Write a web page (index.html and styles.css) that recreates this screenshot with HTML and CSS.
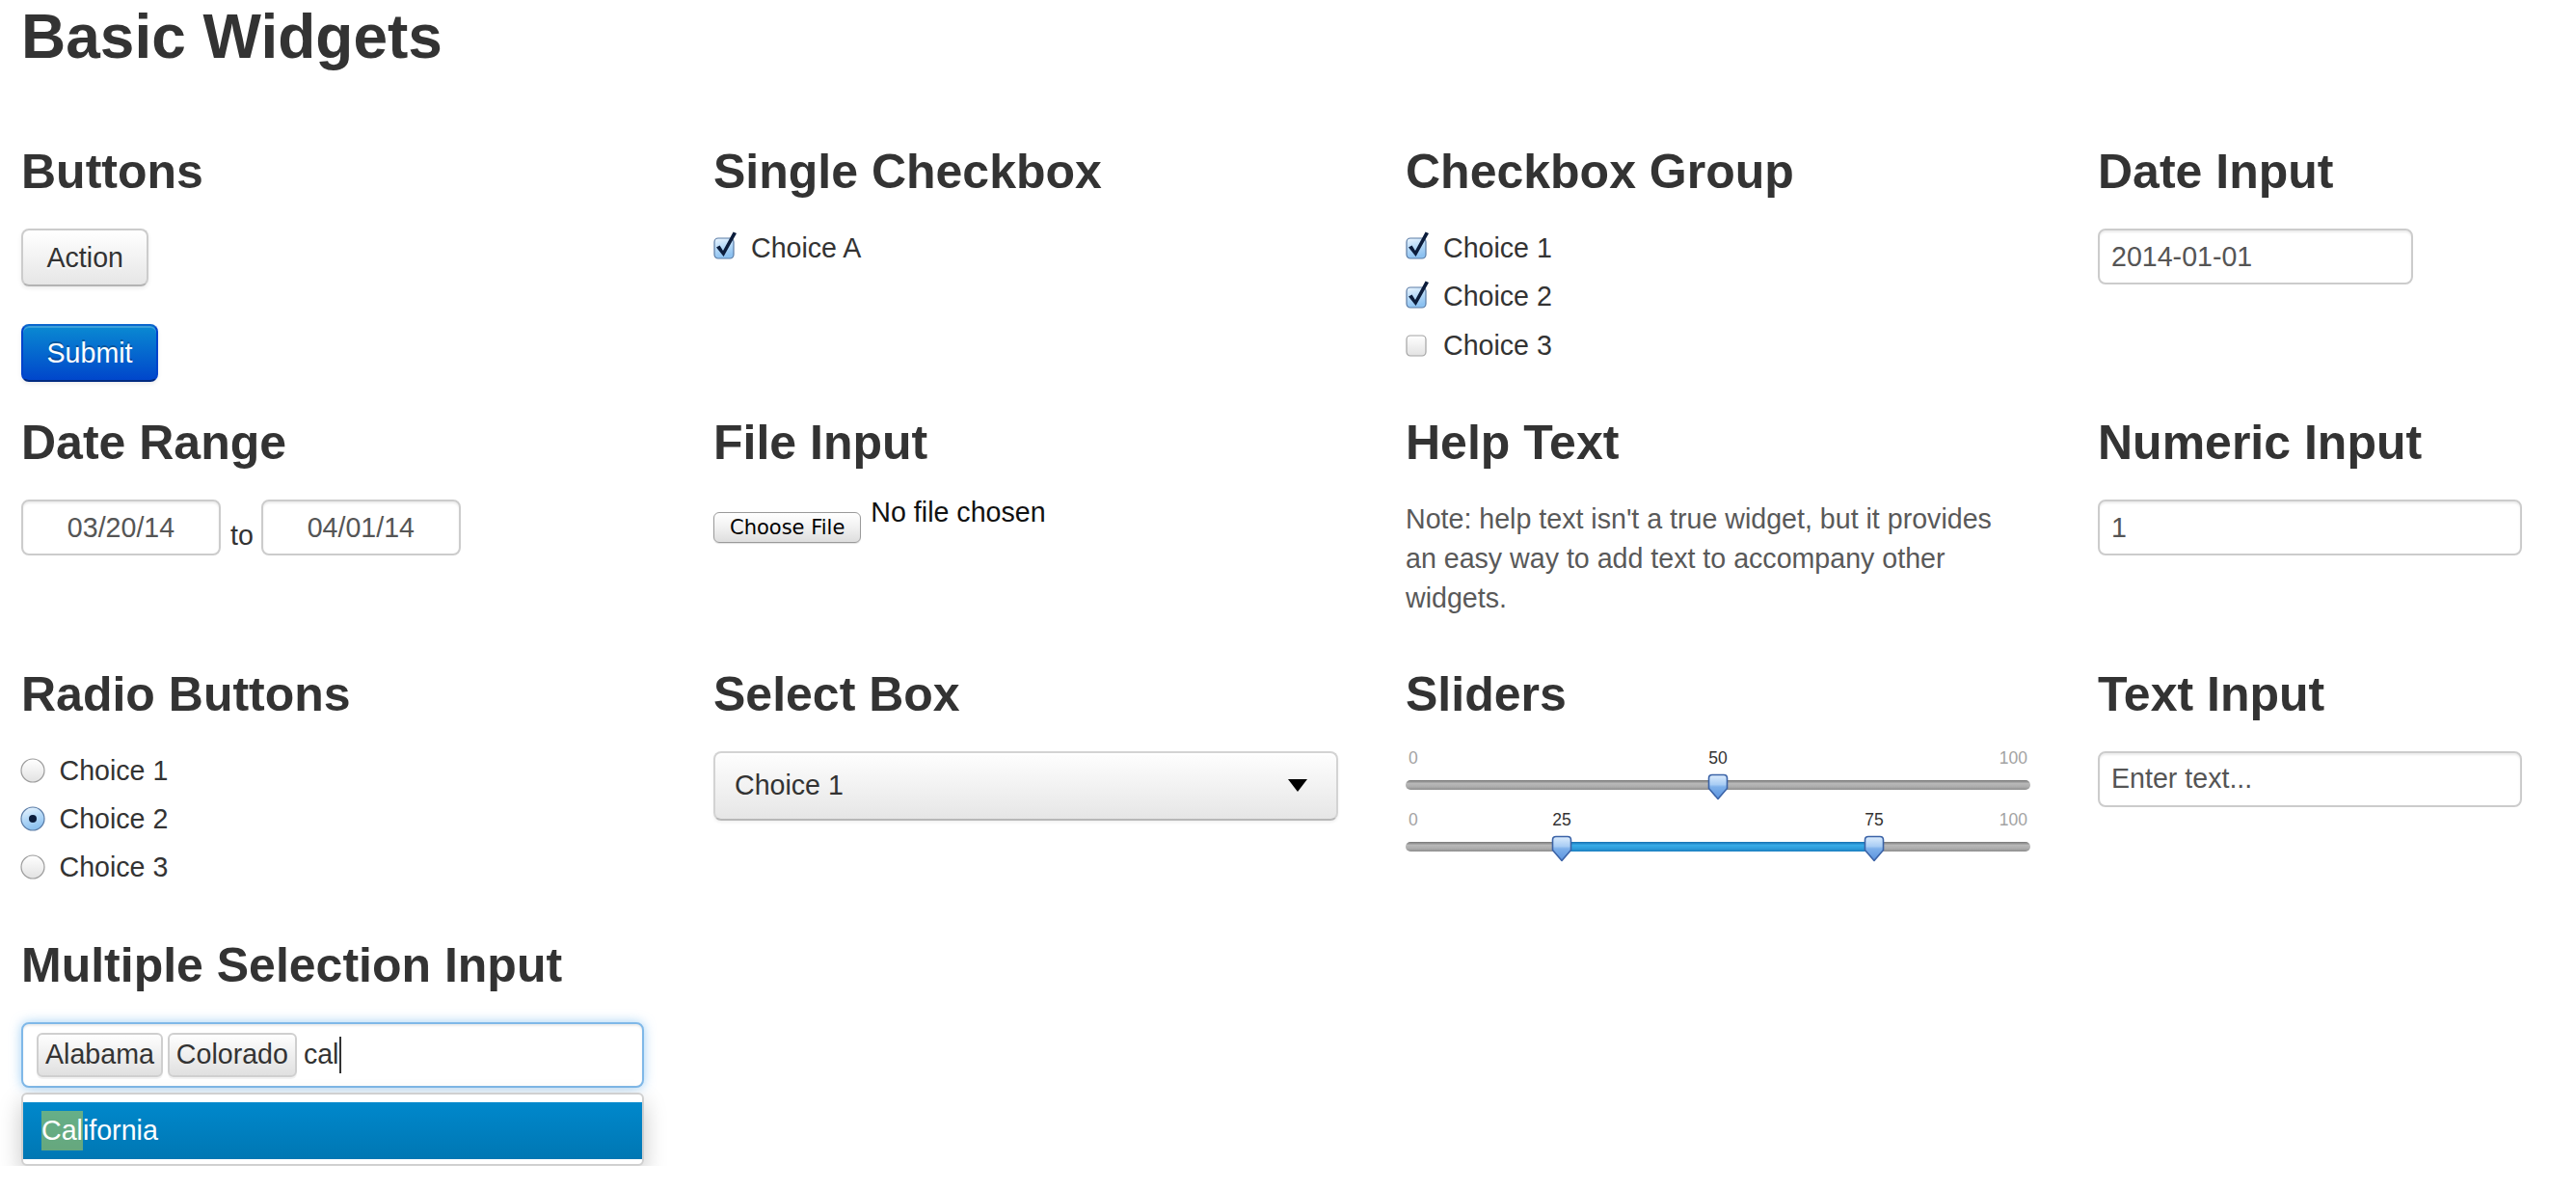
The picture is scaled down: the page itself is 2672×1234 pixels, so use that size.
FILE: index.html
```html
<!DOCTYPE html>
<html lang="en">
<head>
<meta charset="utf-8">
<title>Basic Widgets</title>
<link rel="stylesheet" href="styles.css">
</head>
<body>
<svg class="defs" width="0" height="0" aria-hidden="true">
  <defs>
    <linearGradient id="cbOn" x1="0" y1="0" x2="0.3" y2="1">
      <stop offset="0" stop-color="#eef7ff"/>
      <stop offset="0.5" stop-color="#b9dbf8"/>
      <stop offset="1" stop-color="#8cc1f0"/>
    </linearGradient>
    <linearGradient id="cbOff" x1="0" y1="0" x2="0" y2="1">
      <stop offset="0" stop-color="#ffffff"/>
      <stop offset="1" stop-color="#e2e2e2"/>
    </linearGradient>
    <linearGradient id="hdl" x1="0" y1="0" x2="0" y2="1">
      <stop offset="0" stop-color="#dcecfd"/>
      <stop offset="0.4" stop-color="#a9cdf4"/>
      <stop offset="0.5" stop-color="#7eb0ea"/>
      <stop offset="1" stop-color="#5b93de"/>
    </linearGradient>
  </defs>
</svg>
<div class="page">
  <h2 class="title">Basic Widgets</h2>
  <div class="grid">

    <section class="cell">
      <h3>Buttons</h3>
      <div class="btn-col">
        <button class="btn">Action</button>
        <button class="btn btn-primary">Submit</button>
      </div>
    </section>

    <section class="cell">
      <h3>Single Checkbox</h3>
      <div class="options">
        <label class="opt">
          <svg class="cb" viewBox="0 0 26 30" width="26" height="30"><rect x="1" y="8" width="20" height="21" rx="4" fill="url(#cbOn)" stroke="#5b7ca6" stroke-width="1.2"/><path d="M3 17.5 L6.6 15.6 L10 21 L20.6 1.5 L24 2.9 L10.6 27 Z" fill="#0c1d3c"/></svg>
          <span>Choice A</span>
        </label>
      </div>
    </section>

    <section class="cell">
      <h3>Checkbox Group</h3>
      <div class="options">
        <label class="opt">
          <svg class="cb" viewBox="0 0 26 30" width="26" height="30"><rect x="1" y="8" width="20" height="21" rx="4" fill="url(#cbOn)" stroke="#5b7ca6" stroke-width="1.2"/><path d="M3 17.5 L6.6 15.6 L10 21 L20.6 1.5 L24 2.9 L10.6 27 Z" fill="#0c1d3c"/></svg>
          <span>Choice 1</span>
        </label>
        <label class="opt">
          <svg class="cb" viewBox="0 0 26 30" width="26" height="30"><rect x="1" y="8" width="20" height="21" rx="4" fill="url(#cbOn)" stroke="#5b7ca6" stroke-width="1.2"/><path d="M3 17.5 L6.6 15.6 L10 21 L20.6 1.5 L24 2.9 L10.6 27 Z" fill="#0c1d3c"/></svg>
          <span>Choice 2</span>
        </label>
        <label class="opt">
          <svg class="cb" viewBox="0 0 26 30" width="26" height="30"><rect x="1" y="8" width="20" height="21" rx="4" fill="url(#cbOff)" stroke="#a3a3a3" stroke-width="1.2"/></svg>
          <span>Choice 3</span>
        </label>
      </div>
    </section>

    <section class="cell">
      <h3>Date Input</h3>
      <input class="input w-date" type="text" value="2014-01-01" readonly>
    </section>

    <section class="cell">
      <h3>Date Range</h3>
      <div class="range-row">
        <input class="input w-range" type="text" value="03/20/14" readonly>
        <span class="to">to</span>
        <input class="input w-range" type="text" value="04/01/14" readonly>
      </div>
    </section>

    <section class="cell">
      <h3>File Input</h3>
      <div class="file">
        <button class="file-btn">Choose File</button>
        <span class="file-text">No file chosen</span>
      </div>
    </section>

    <section class="cell">
      <h3>Help Text</h3>
      <p class="help">Note: help text isn't a true widget, but it provides an easy way to add text to accompany other widgets.</p>
    </section>

    <section class="cell">
      <h3>Numeric Input</h3>
      <input class="input w-wide" type="text" value="1" readonly>
    </section>

    <section class="cell">
      <h3>Radio Buttons</h3>
      <div class="options">
        <label class="opt">
          <svg class="rb" viewBox="0 0 26 26" width="26" height="26"><circle cx="13" cy="13" r="12" fill="url(#cbOff)" stroke="#9c9c9c" stroke-width="1.2"/></svg>
          <span>Choice 1</span>
        </label>
        <label class="opt">
          <svg class="rb" viewBox="0 0 26 26" width="26" height="26"><circle cx="13" cy="13" r="12" fill="url(#cbOn)" stroke="#5b7ca6" stroke-width="1.2"/><circle cx="13" cy="13" r="4" fill="#0c1d3c"/></svg>
          <span>Choice 2</span>
        </label>
        <label class="opt">
          <svg class="rb" viewBox="0 0 26 26" width="26" height="26"><circle cx="13" cy="13" r="12" fill="url(#cbOff)" stroke="#9c9c9c" stroke-width="1.2"/></svg>
          <span>Choice 3</span>
        </label>
      </div>
    </section>

    <section class="cell">
      <h3>Select Box</h3>
      <div class="select">
        <span>Choice 1</span>
        <span class="caret"></span>
      </div>
    </section>

    <section class="cell">
      <h3>Sliders</h3>
      <div class="sliders">
        <div class="slider">
          <div class="sl-labels">
            <span>0</span>
            <span class="sl-val" style="left: 50%">50</span>
            <span>100</span>
          </div>
          <div class="track">
            <svg class="handle" style="left: 50%" viewBox="0 0 22 28" width="22" height="28"><path d="M1.5 5 Q1.5 1.5 5 1.5 H17 Q20.5 1.5 20.5 5 V15.5 L11 26.5 L1.5 15.5 Z" fill="url(#hdl)" stroke="#3b63a7" stroke-width="1.6" stroke-linejoin="round"/></svg>
          </div>
        </div>
        <div class="slider">
          <div class="sl-labels">
            <span>0</span>
            <span class="sl-val" style="left: 25%">25</span>
            <span class="sl-val" style="left: 75%">75</span>
            <span>100</span>
          </div>
          <div class="track">
            <div class="range" style="left: 25%; width: 50%"></div>
            <svg class="handle" style="left: 25%" viewBox="0 0 22 28" width="22" height="28"><path d="M1.5 5 Q1.5 1.5 5 1.5 H17 Q20.5 1.5 20.5 5 V15.5 L11 26.5 L1.5 15.5 Z" fill="url(#hdl)" stroke="#3b63a7" stroke-width="1.6" stroke-linejoin="round"/></svg>
            <svg class="handle" style="left: 75%" viewBox="0 0 22 28" width="22" height="28"><path d="M1.5 5 Q1.5 1.5 5 1.5 H17 Q20.5 1.5 20.5 5 V15.5 L11 26.5 L1.5 15.5 Z" fill="url(#hdl)" stroke="#3b63a7" stroke-width="1.6" stroke-linejoin="round"/></svg>
          </div>
        </div>
      </div>
    </section>

    <section class="cell">
      <h3>Text Input</h3>
      <input class="input w-wide" type="text" value="Enter text..." readonly>
    </section>

    <section class="cell">
      <h3>Multiple Selection Input</h3>
      <div class="ms">
        <span class="ms-item">Alabama</span>
        <span class="ms-item">Colorado</span>
        <span class="ms-typed">cal</span>
        <span class="caret-line"></span>
      </div>
      <div class="dd">
        <div class="dd-active"><span class="hl">Cal</span>ifornia</div>
      </div>
    </section>

  </div>
</div>
</body>
</html>
```

FILE: styles.css
```css
html, body {
  margin: 0;
  padding: 0;
  background: #ffffff;
  overflow: hidden;
}

body {
  font-family: "Liberation Sans", Arial, Helvetica, sans-serif;
  font-size: 28.6px;
  line-height: 40.8px;
  color: #333333;
}

.defs {
  display: block;
  width: 0;
  height: 0;
  overflow: hidden;
}

.page {
  padding: 0 0 0 22px;
}

.title {
  margin: -3.5px 0 58.5px;
  font-size: 64px;
  line-height: 82px;
  font-weight: 700;
  color: #333333;
}

.grid {
  display: grid;
  grid-template-columns: repeat(4, 648px);
  column-gap: 70px;
  grid-template-rows: 281px 260.5px 281px auto;
}

.cell h3 {
  margin: 0 0 18px;
  font-size: 50px;
  line-height: 82px;
  font-weight: 700;
  color: #333333;
}

/* Buttons */
.btn-col {
  display: flex;
  flex-direction: column;
  align-items: flex-start;
  gap: 39px;
}

.btn {
  box-sizing: border-box;
  height: 60px;
  padding: 0 24.5px;
  font-family: inherit;
  font-size: 28.6px;
  line-height: 1;
  color: #333333;
  background: linear-gradient(#ffffff, #e6e6e6);
  border: 2px solid #cccccc;
  border-bottom-color: #b3b3b3;
  border-radius: 8px;
  box-shadow: inset 0 2px 0 rgba(255, 255, 255, 0.2), 0 2px 4px rgba(0, 0, 0, 0.08);
  text-shadow: 0 2px 2px rgba(255, 255, 255, 0.75);
}

.btn-primary {
  color: #ffffff;
  background: linear-gradient(#0a8ad2, #0046cb);
  border-color: #0a66cc #0044cc #002a80;
  text-shadow: 0 -2px 0 rgba(0, 0, 0, 0.25);
}

/* Checkboxes and radios */
.options {
  display: flex;
  flex-direction: column;
  gap: 9.5px;
}

.opt {
  display: flex;
  align-items: center;
  gap: 13px;
  height: 40.8px;
}

.cb {
  display: block;
  margin-bottom: 6px;
  flex: none;
}

.rb {
  display: block;
  margin-left: -1.5px;
  margin-right: 2px;
  flex: none;
}

/* Text inputs */
.input {
  box-sizing: border-box;
  display: block;
  height: 58px;
  margin: 0;
  padding: 0 12px;
  font-family: inherit;
  font-size: 28.6px;
  color: #555555;
  background: #ffffff;
  border: 2px solid #cccccc;
  border-radius: 8px;
  box-shadow: inset 0 2px 2px rgba(0, 0, 0, 0.075);
  outline: none;
}

.w-date {
  width: 327px;
}

.w-wide {
  width: 440px;
}

.w-range {
  width: 207px;
  text-align: center;
}

.range-row {
  display: flex;
  align-items: flex-end;
}

.to {
  margin: 0 8px 0 10px;
  color: #333333;
}

/* File input */
.file {
  display: flex;
  align-items: flex-start;
  gap: 10px;
}

.file-btn {
  box-sizing: border-box;
  height: 32px;
  margin-top: 13px;
  padding: 0 16px;
  font-family: "DejaVu Sans", "Liberation Sans", sans-serif;
  font-size: 21px;
  line-height: 1;
  color: #000000;
  background: linear-gradient(#ffffff, #f1f1f1 50%, #dedede);
  border: 1.5px solid #9a9a9a;
  border-radius: 6px;
  box-shadow: 0 1px 1px rgba(0, 0, 0, 0.12);
}

.file-text {
  margin-top: -7px;
  color: #111111;
}

/* Help text */
.help {
  margin: 0;
  max-width: 622px;
  color: #595959;
}

/* Select box */
.select {
  box-sizing: border-box;
  height: 72px;
  padding: 0 30px 0 20px;
  display: flex;
  align-items: center;
  justify-content: space-between;
  color: #333333;
  background: linear-gradient(#fefefe, #e6e6e6);
  border: 2px solid #d3d3d3;
  border-bottom-color: #b8b8b8;
  border-radius: 8px;
  box-shadow: 0 2px 3px rgba(0, 0, 0, 0.06), inset 0 2px 0 rgba(255, 255, 255, 0.8);
}

.caret {
  width: 0;
  height: 0;
  border-top: 13px solid #000000;
  border-left: 10.5px solid transparent;
  border-right: 10.5px solid transparent;
}

/* Sliders */
.sliders {
  margin-top: -4px;
}

.slider {
  position: relative;
  height: 64px;
}

.sl-labels {
  position: relative;
  height: 22px;
  padding: 0 3px;
  display: flex;
  justify-content: space-between;
  font-size: 17.5px;
  line-height: 22px;
  color: #a3a3a3;
}

.sl-val {
  position: absolute;
  top: 0;
  transform: translateX(-50%);
  color: #333333;
}

.track {
  position: absolute;
  left: 0;
  right: 0;
  top: 34px;
  height: 10px;
  border-radius: 5px;
  background: linear-gradient(#767676, #b8b8b8 35%, #acacac 70%, #8c8c8c);
}

.range {
  position: absolute;
  top: 0;
  bottom: 0;
  background: linear-gradient(#146fb0, #38abe7 35%, #2d9cda 70%, #1a7dbf);
}

.handle {
  position: absolute;
  top: -7px;
  margin-left: -11px;
  display: block;
}

/* Multiple selection */
.ms {
  box-sizing: border-box;
  width: 646px;
  height: 68.5px;
  margin-top: 1.5px;
  padding: 0 14px;
  display: flex;
  align-items: center;
  background: #ffffff;
  border: 2px solid #7fb8e8;
  border-radius: 8px;
  box-shadow: 0 0 12px rgba(82, 168, 236, 0.55), inset 0 2px 2px rgba(0, 0, 0, 0.075);
}

.ms-item {
  box-sizing: border-box;
  height: 46px;
  margin-right: 5px;
  padding: 0 7px;
  display: flex;
  align-items: center;
  color: #333333;
  background: linear-gradient(#fefefe, #e0e0e0);
  border: 2px solid #cfcfcf;
  border-radius: 6px;
  box-shadow: 0 2px 0 rgba(0, 0, 0, 0.05);
}

.ms-typed {
  margin-left: 2px;
  color: #333333;
}

.caret-line {
  width: 2px;
  height: 38px;
  margin-left: 1px;
  background: #333333;
}

.dd {
  box-sizing: border-box;
  width: 646px;
  margin-top: 5px;
  padding: 8px 0 5px;
  background: #ffffff;
  border: 2px solid #d0d0d0;
  border-radius: 6px;
  box-shadow: 0 10px 24px rgba(0, 0, 0, 0.22);
}

.dd-active {
  height: 59px;
  padding-left: 19px;
  display: flex;
  align-items: center;
  color: #ffffff;
  background: linear-gradient(#0088cc, #0077b3);
}

.hl {
  background: rgba(255, 237, 40, 0.4);
}
```
